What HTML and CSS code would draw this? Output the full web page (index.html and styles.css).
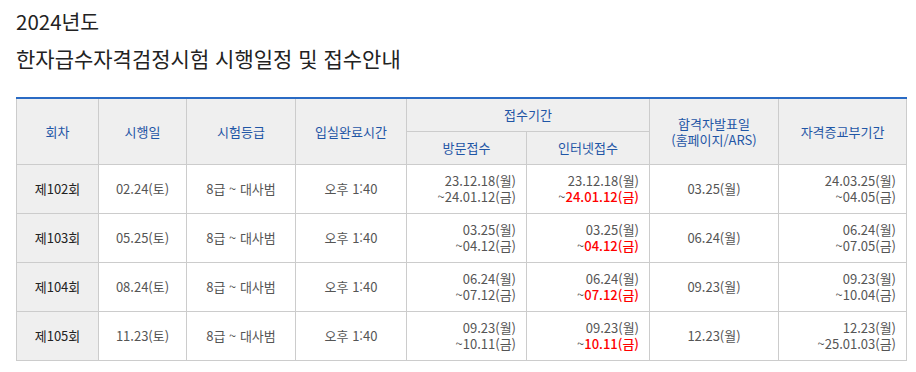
FILE: index.html
```html
<!DOCTYPE html>
<html lang="ko">
<head>
<meta charset="utf-8">
<link rel="stylesheet" href="styles.css">
</head>
<body>
<div class="page">
  <h2 class="year">2024년도</h2>
  <h1 class="title">한자급수자격검정시험 시행일정 및 접수안내</h1>
  <table class="sched">
    <colgroup>
      <col class="c1"><col class="c2"><col class="c3"><col class="c4"><col class="c5"><col class="c6"><col class="c7"><col class="c8">
    </colgroup>
    <thead>
      <tr>
        <th rowspan="2">회차</th>
        <th rowspan="2">시행일</th>
        <th rowspan="2">시험등급</th>
        <th rowspan="2">입실완료시간</th>
        <th colspan="2">접수기간</th>
        <th rowspan="2">합격자발표일<br>(홈페이지/ARS)</th>
        <th rowspan="2">자격증교부기간</th>
      </tr>
      <tr>
        <th>방문접수</th>
        <th>인터넷접수</th>
      </tr>
    </thead>
    <tbody>
      <tr>
        <td class="round">제102회</td>
        <td>02.24(토)</td>
        <td>8급 ~ 대사범</td>
        <td>오후 1:40</td>
        <td class="r"><div>23.12.18(월)</div><div>~24.01.12(금)</div></td>
        <td class="r"><div>23.12.18(월)</div><div>~<span class="red">24.01.12(금)</span></div></td>
        <td>03.25(월)</td>
        <td class="r"><div>24.03.25(월)</div><div>~04.05(금)</div></td>
      </tr>
      <tr>
        <td class="round">제103회</td>
        <td>05.25(토)</td>
        <td>8급 ~ 대사범</td>
        <td>오후 1:40</td>
        <td class="r"><div>03.25(월)</div><div>~04.12(금)</div></td>
        <td class="r"><div>03.25(월)</div><div>~<span class="red">04.12(금)</span></div></td>
        <td>06.24(월)</td>
        <td class="r"><div>06.24(월)</div><div>~07.05(금)</div></td>
      </tr>
      <tr>
        <td class="round">제104회</td>
        <td>08.24(토)</td>
        <td>8급 ~ 대사범</td>
        <td>오후 1:40</td>
        <td class="r"><div>06.24(월)</div><div>~07.12(금)</div></td>
        <td class="r"><div>06.24(월)</div><div>~<span class="red">07.12(금)</span></div></td>
        <td>09.23(월)</td>
        <td class="r"><div>09.23(월)</div><div>~10.04(금)</div></td>
      </tr>
      <tr>
        <td class="round">제105회</td>
        <td>11.23(토)</td>
        <td>8급 ~ 대사범</td>
        <td>오후 1:40</td>
        <td class="r"><div>09.23(월)</div><div>~10.11(금)</div></td>
        <td class="r"><div>09.23(월)</div><div>~<span class="red">10.11(금)</span></div></td>
        <td>12.23(월)</td>
        <td class="r"><div>12.23(월)</div><div>~25.01.03(금)</div></td>
      </tr>
    </tbody>
  </table>
</div>
</body>
</html>
```

FILE: styles.css
```css
html, body {
  margin: 0;
  padding: 0;
  background: #fff;
}
body {
  font-family: "Noto Sans CJK KR", "Noto Sans", sans-serif;
  color: #333;
}
.page {
  padding: 6px 10px 0 16px;
}
.year {
  margin: 0;
  font-size: 20.5px;
  font-weight: 400;
  line-height: 30px;
  color: #222;
}
.title {
  margin: 7px 0 0;
  font-size: 21px;
  font-weight: 400;
  line-height: 30px;
  color: #222;
}
.sched {
  margin-top: 24px;
  width: 890px;
  table-layout: fixed;
  border-collapse: collapse;
  border-top: 2px solid #2a6bc4;
  font-size: 13px;
  line-height: 16px;
}
.c1 { width: 82px; }
.c2 { width: 88px; }
.c3 { width: 109px; }
.c4 { width: 111px; }
.c5 { width: 120px; }
.c6 { width: 123px; }
.c7 { width: 129px; }
.c8 { width: 128px; }
.sched th, .sched td {
  border: 1px solid #cccccc;
  padding: 0 10px;
  text-align: center;
  vertical-align: middle;
}
.sched th {
  background: #efefef;
  color: #1f56a6;
  font-weight: 400;
  height: 32px;
}
.sched td {
  height: 48px;
  color: #555;
}
.sched td.round {
  background: #efefef;
  color: #222;
}
.sched td.r {
  text-align: right;
}
.red {
  color: #ff0000;
  font-weight: 500;
}
```
